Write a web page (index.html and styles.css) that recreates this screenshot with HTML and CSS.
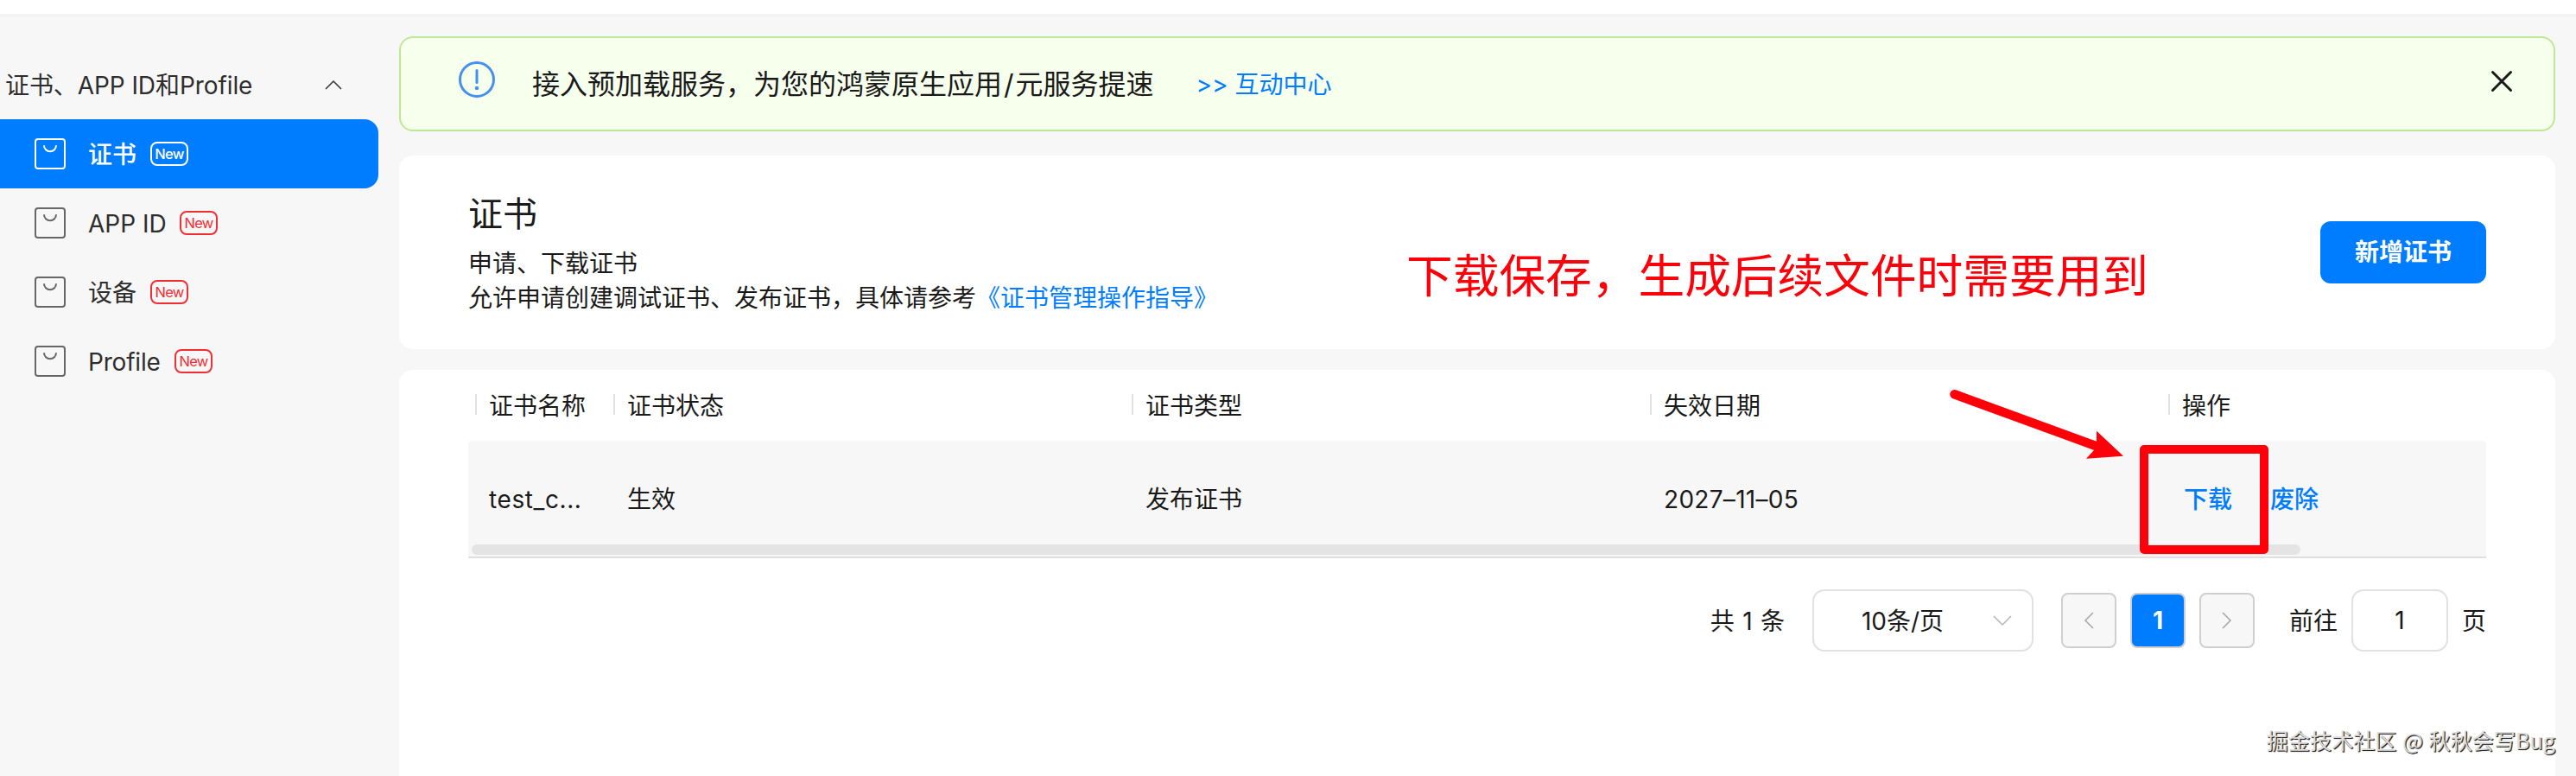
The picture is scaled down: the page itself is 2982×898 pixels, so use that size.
FILE: index.html
```html
<!DOCTYPE html>
<html lang="zh-CN">
<head>
<meta charset="utf-8">
<title>证书</title>
<link rel="stylesheet" href="styles.css">
</head>
<body>
<div class="page">
  <div class="topbar"></div>
  <div class="layout">
    <nav class="sidebar">
      <div class="group">
        <span class="group-name">证书、APP ID和Profile</span>
        <svg class="group-arrow" viewBox="0 0 20 12"><path d="M1 11 L10 2 L19 11"/></svg>
      </div>
      <a class="item active">
        <svg class="bag" viewBox="0 0 36 36"><rect x="1" y="1" width="34" height="34" rx="3"/><path d="M11 8.300a7 7 0 0 0 14 0"/></svg>
        <span class="label">证书</span><span class="tag">New</span>
      </a>
      <a class="item">
        <svg class="bag" viewBox="0 0 36 36"><rect x="1" y="1" width="34" height="34" rx="3"/><path d="M11 8.300a7 7 0 0 0 14 0"/></svg>
        <span class="label label-app">APP ID</span><span class="tag">New</span>
      </a>
      <a class="item">
        <svg class="bag" viewBox="0 0 36 36"><rect x="1" y="1" width="34" height="34" rx="3"/><path d="M11 8.300a7 7 0 0 0 14 0"/></svg>
        <span class="label">设备</span><span class="tag">New</span>
      </a>
      <a class="item">
        <svg class="bag" viewBox="0 0 36 36"><rect x="1" y="1" width="34" height="34" rx="3"/><path d="M11 8.300a7 7 0 0 0 14 0"/></svg>
        <span class="label label-profile">Profile</span><span class="tag">New</span>
      </a>
    </nav>
    <main class="main">
      <div class="notice">
        <svg class="notice-icon" viewBox="0 0 42 42"><circle cx="21" cy="21" r="19.500"/><path d="M21 10.500V24.500"/><circle class="dot" cx="21" cy="31" r="2.200"/></svg>
        <span class="notice-text">接入预加载服务，为您的鸿蒙原生应用<span class="slash">/</span>元服务提速</span>
        <a class="notice-link">&gt;&gt; 互动中心</a>
        <svg class="close" viewBox="0 0 24 24"><path d="M1.500 1.500L22.500 22.500M22.500 1.500L1.500 22.500"/></svg>
      </div>
      <section class="intro">
        <div class="intro-body">
          <h1 class="title">证书</h1>
          <p class="line">申请、下载证书</p>
          <p class="line">允许申请创建调试证书、发布证书，具体请参考<a class="link">《证书管理操作指导》</a></p>
        </div>
        <button class="primary">新增证书</button>
      </section>
      <section class="list">
        <div class="row head">
          <div class="cell">证书名称</div><div class="cell">证书状态</div><div class="cell">证书类型</div><div class="cell">失效日期</div><div class="cell">操作</div>
        </div>
        <div class="row data">
          <div class="cell name">test_c...</div><div class="cell">生效</div><div class="cell">发布证书</div><div class="cell date">2027–11–05</div>
          <div class="cell actions"><a>下载</a><a>废除</a></div>
          <div class="scrollbar"></div>
        </div>
        <div class="pager">
          <span class="total">共 1 条</span>
          <div class="select"><span class="select-value">10条/页</span><svg class="select-arrow" viewBox="0 0 22 12"><path d="M1 1L11 11L21 1"/></svg></div>
          <div class="pages">
            <div class="page-btn"><svg class="chev" viewBox="0 0 12 20"><path d="M11 1L2 10L11 19"/></svg></div>
            <div class="page-btn current">1</div>
            <div class="page-btn"><svg class="chev" viewBox="0 0 12 20"><path d="M1 1L10 10L1 19"/></svg></div>
          </div>
          <div class="jump"><span class="jump-text">前往</span><div class="jump-input">1</div><span class="jump-text">页</span></div>
        </div>
      </section>
    </main>
  </div>
  <div class="note">下载保存，生成后续文件时需要用到</div>
  <svg class="arrow" viewBox="0 0 210 90"><path class="shaft" d="M12.500 16.300L176 76"/><path class="tip" d="M208 87.700L177 58.700L177 72L174 81L165 90.700Z"/></svg>
  <div class="frame"></div>
  <div class="watermark">掘金技术社区 @ 秋秋会写Bug</div>
</div>
</body>
</html>
```
FILE: styles.css
```css
* { box-sizing: border-box; margin: 0; padding: 0; }
body {
  font-family: Inter, "Noto Sans CJK SC", sans-serif;
  font-size: 28px;
  line-height: 40px;
  color: #1a1a1a;
  background: #f7f7f7;
}
svg { display: block; fill: none; flex: none; overflow: visible; }
.page { position: relative; width: 2982px; height: 898px; overflow: hidden; display: flex; flex-direction: column; }
.topbar { height: 16px; background: #fff; flex: none; }
.layout { flex: 1; display: flex; gap: 24px; padding-right: 24px; border-top: 4px solid #f3f3f3; background: #f7f7f7; }

.sidebar { width: 438px; flex: none; padding-top: 38px; color: #2e2e2e; }
.group { height: 80px; padding: 0 42px 0 6px; display: flex; align-items: center; justify-content: space-between; white-space: nowrap; }
.group-name { padding-top: 1px; letter-spacing: -0.080px; }
.group-arrow { width: 20px; height: 12px; stroke: #333; stroke-width: 1.500; }
.item { height: 80px; padding-left: 40px; display: flex; align-items: center; border-radius: 0 16px 16px 0; }
.bag { width: 36px; height: 36px; stroke: #666; stroke-width: 2; margin-right: 26px; }
.label { width: 56px; margin-right: 16px; padding-top: 1px; white-space: nowrap; }
.label-app { width: 90px; }
.label-profile { width: 84px; letter-spacing: -0.200px; }
.tag { width: 44px; height: 28px; border: 2px solid #f02f35; border-radius: 8px; color: #f02f35; font-size: 16.500px; line-height: 25px; text-align: center; letter-spacing: -0.700px; }
.active { background: #007dff; color: #fff; font-weight: 500; }
.active .bag { stroke: #fff; }
.active .tag { border-color: #fff; color: #fff; }

.main { flex: 1; display: flex; flex-direction: column; padding-top: 22px; }
.notice { height: 110px; flex: none; border: 2px solid #bfe896; border-radius: 16px; background: #f7ffed; padding: 0 48px 0 67px; display: flex; align-items: center; }
.notice-icon { width: 42px; height: 42px; margin: -10px 43px 0 0; stroke: #4390f0; stroke-width: 3; stroke-linecap: round; }
.notice-icon .dot { fill: #4390f0; stroke: none; }
.notice-text { font-size: 32px; padding-top: 1px; }
.slash { padding: 0 2px; }
.notice-link { margin-left: 49px; padding-top: 2px; color: #007dff; }
.close { width: 24px; height: 24px; margin: -6px 0 0 auto; stroke: #1a1a1a; stroke-width: 3; stroke-linecap: round; }

.intro { height: 224px; flex: none; margin-top: 28px; padding: 0 80px; background: #fff; border-radius: 16px; display: flex; align-items: flex-start; justify-content: space-between; }
.intro-body { padding-top: 38px; }
.title { font-size: 40px; line-height: 60px; font-weight: 400; margin-bottom: 7px; }
.link { color: #007dff; }
.primary { width: 192px; height: 72px; margin-top: 76px; padding-top: 1px; border: 0; border-radius: 12px; background: #007dff; color: #fff; font: 700 28px/71px Inter, "Noto Sans CJK SC", sans-serif; text-align: center; }

.list { flex: 1; margin-top: 24px; padding: 0 80px; background: #fff; border-radius: 16px 16px 0 0; }
.row { display: grid; grid-template-columns: 160px 600px 600px 600px 1fr; align-items: center; }
.cell { padding: 2px 0 0 24px; white-space: nowrap; }
.name { letter-spacing: 0.600px; }
.date { letter-spacing: 0.300px; }
.head { height: 82px; }
.head .cell { position: relative; }
.head .cell::before { content: ""; position: absolute; left: 8px; top: 8px; width: 2px; height: 24px; background: #e2e2e2; }
.data { position: relative; height: 136px; background: #f7f7f7; border-bottom: 2px solid #dfdfdf; border-radius: 4px 4px 0 0; }
.actions { display: flex; gap: 44px; padding-left: 26px; color: #007dff; font-weight: 500; }
.scrollbar { position: absolute; left: 4px; bottom: 2px; width: 2117px; height: 12px; border-radius: 6px; background: #e4e4e4; }

.pager { margin-top: 36px; height: 72px; display: flex; align-items: center; justify-content: flex-end; gap: 32px; white-space: nowrap; }
.total { padding-top: 2px; word-spacing: 1.500px; }
.select { width: 256px; height: 72px; border: 2px solid #e1e1e1; border-radius: 14px; padding: 0 23px 0 55px; display: flex; align-items: center; justify-content: space-between; }
.select-value { padding-top: 2px; }
.select-arrow { width: 22px; height: 12px; stroke: #b5b5b5; stroke-width: 1.500; }
.pages { display: flex; gap: 16px; }
.page-btn { width: 64px; height: 64px; border: 2px solid #cfcfcf; border-radius: 8px; background: #f7f7f7; display: flex; align-items: center; justify-content: center; }
.current { background: #007dff; color: #fff; font-weight: 700; }
.chev { width: 12px; height: 20px; stroke: #a5a5a5; stroke-width: 1.500; }
.jump { display: flex; align-items: center; gap: 16px; margin-left: 8px; }
.jump-text { padding-top: 2px; }
.jump-input { width: 112px; height: 72px; border: 2px solid #e1e1e1; border-radius: 14px; line-height: 69px; text-align: center; }

/* Annotations drawn over the console */
.note { position: absolute; left: 1628px; top: 280px; font-size: 53.700px; line-height: 80px; color: #ff000a; white-space: nowrap; }
.arrow { position: absolute; left: 2250px; top: 440px; width: 210px; height: 90px; }
.shaft { stroke: #ff000a; stroke-width: 10.500; stroke-linecap: round; }
.tip { fill: #ff000a; }
.frame { position: absolute; left: 2477px; top: 515px; width: 149px; height: 126px; border: 10px solid #ff000a; border-radius: 5px; }
.watermark { position: absolute; right: 24px; top: 836px; font-family: "Noto Sans CJK SC", sans-serif; font-size: 25px; line-height: 40px; letter-spacing: 0.100px; word-spacing: 1px; color: #dcdcdc; text-shadow: 1px 1px 1px #222, 1px 1px 0 #555; white-space: nowrap; }
```
